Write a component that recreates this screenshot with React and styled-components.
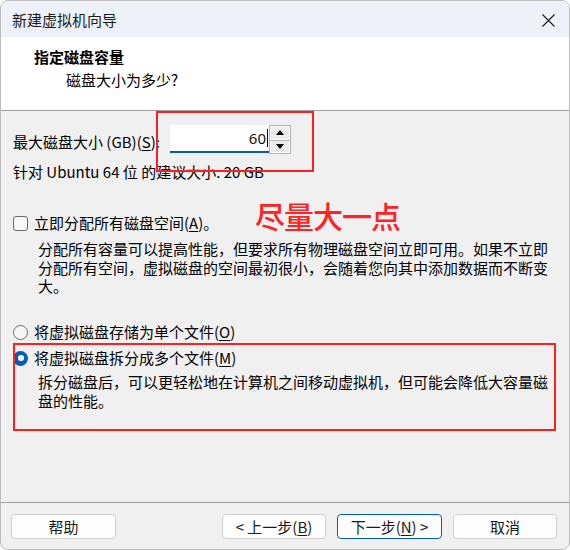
import React from 'react';
import styled, { createGlobalStyle } from 'styled-components';

const GlobalStyle = createGlobalStyle`
  html, body {
    margin: 0;
    padding: 0;
    background: #ffffff;
  }
  body {
    font-family: "Noto Sans CJK SC", "Noto Sans", sans-serif;
    color: #000;
  }
`;

const Window = styled.div`
  width: 570px;
  height: 550px;
  box-sizing: border-box;
  border: 1px solid #bdbdbd;
  border-radius: 8px;
  overflow: hidden;
  display: flex;
  flex-direction: column;
  background: #f0f0f0;
`;

const TitleBar = styled.div`
  height: 36px;
  flex: none;
  display: flex;
  align-items: center;
  justify-content: space-between;
  padding: 0 14px 0 11px;
  background: #eef2f8;
  font-size: 15px;
  color: #1b1b1b;
`;

const CloseIcon = styled.svg`
  width: 13px;
  height: 13px;
  margin-top: 2px;
`;

const Header = styled.div`
  flex: none;
  background: #ffffff;
  border-bottom: 1px solid #a0a0a0;
  padding: 10px 0 0 33px;
  height: 63px;
`;

const HeaderTitle = styled.div`
  font-size: 15px;
  font-weight: 700;
  line-height: 20px;
`;

const HeaderSub = styled.div`
  font-size: 15px;
  line-height: 20px;
  margin-top: 3px;
  padding-left: 32px;
`;

const Body = styled.div`
  position: relative;
  height: 391px;
  flex: none;
  padding-left: 12px;
  box-sizing: border-box;
  font-size: 15px;
`;

const FieldRow = styled.div`
  display: flex;
  align-items: center;
  height: 28px;
  padding-top: 14px;
`;

const FieldLabel = styled.label`
  width: 157px;
  line-height: 20px;
  margin-top: 5px;
`;

const NumberBox = styled.div`
  width: 99px;
  height: 28px;
  box-sizing: border-box;
  background: #ffffff;
  border-bottom: 2px solid #005fb8;
  display: flex;
  align-items: center;
  justify-content: flex-end;
  padding-right: 1px;
  font-family: "Noto Sans", sans-serif;
  font-size: 15px;
  color: #111;
`;

const Caret = styled.span`
  display: inline-block;
  width: 1px;
  height: 18px;
  background: #000;
  margin-left: 1px;
`;

const Spinner = styled.div`
  width: 22px;
  height: 29px;
  display: flex;
  flex-direction: column;
  margin-top: 1px;
  border: 1px solid #b3b3b3;
  box-sizing: border-box;
`;

const SpinButton = styled.div`
  flex: 1;
  display: flex;
  align-items: center;
  justify-content: center;
  background: #ececec;
  border: 1px solid #fafafa;
  & + & {
    border-top: 1px solid #b3b3b3;
  }
`;

const Hint = styled.div`
  line-height: 20px;
  margin-top: 9px;
`;

const OptionRow = styled.div`
  display: flex;
  align-items: center;
  gap: 6px;
  line-height: 20px;
  margin-top: ${p => p.$top}px;
`;

const CheckBox = styled.span`
  width: 15px;
  height: 15px;
  box-sizing: border-box;
  border: 1px solid #6a6a6a;
  border-radius: 3px;
  background: #f8f8f8;
`;

const Radio = styled.span`
  width: 15px;
  height: 15px;
  box-sizing: border-box;
  border-radius: 50%;
  ${p => p.$checked ? `
    background: #005fb8;
    display: flex;
    align-items: center;
    justify-content: center;
    &::after {
      content: "";
      width: 6px;
      height: 6px;
      border-radius: 50%;
      background: #fff;
    }
  ` : `
    border: 1px solid #6a6a6a;
    background: #f6f6f6;
  `}
`;

const Note = styled.div`
  margin-top: ${p => p.$top}px;
  padding-left: 25px;
  white-space: nowrap;
`;

const NoteLine = styled.div`
  height: 18.5px;
  line-height: 18.5px;
`;

const Key = styled.span`
  text-decoration: underline;
  text-underline-offset: 2px;
`;

const RedFrame = styled.div`
  position: absolute;
  border: 2px solid #ff1f1f;
  box-sizing: border-box;
  pointer-events: none;
`;

const RedNote = styled.div`
  position: absolute;
  left: 254px;
  top: 88px;
  font-size: 30px;
  line-height: 32px;
  font-weight: 500;
  color: #ff2424;
  letter-spacing: -1px;
`;

const Footer = styled.div`
  flex: none;
  border-top: 1px solid #a0a0a0;
  display: flex;
  align-items: flex-start;
  padding: 11px 12px 0 10px;
  height: 35px;
`;

const Spacer = styled.div`
  flex: 1;
`;

const ButtonGroup = styled.div`
  display: flex;
  gap: 11px;
`;

const Button = styled.button`
  width: ${p => p.$w || 104}px;
  height: 25px;
  box-sizing: border-box;
  background: #fdfdfd;
  border: 1px solid ${p => p.$primary ? '#005fb8' : '#d0d0d0'};
  border-radius: 4px;
  font-family: "Noto Sans CJK SC", "Noto Sans", sans-serif;
  font-size: 15px;
  line-height: 20px;
  color: #1a1a1a;
  padding: 0;
`;

function Arrow({ up }) {
  return (
    <svg width="8" height="5" viewBox="0 0 8 5">
      <path d={up ? 'M0 5 L4 0 L8 5 Z' : 'M0 0 L8 0 L4 5 Z'} fill="#000" />
    </svg>
  );
}

export default function App() {
  return (
    <>
      <GlobalStyle />
      <Window>
        <TitleBar>
          <span>新建虚拟机向导</span>
          <CloseIcon viewBox="0 0 13 13">
            <path d="M0.5 0.5 L12.5 12.5 M12.5 0.5 L0.5 12.5" stroke="#1a1a1a" strokeWidth="1.1" />
          </CloseIcon>
        </TitleBar>

        <Header>
          <HeaderTitle>指定磁盘容量</HeaderTitle>
          <HeaderSub>磁盘大小为多少?</HeaderSub>
        </Header>

        <Body>
          <FieldRow>
            <FieldLabel>最大磁盘大小 (GB)(<Key>S</Key>):</FieldLabel>
            <NumberBox>
              60<Caret />
            </NumberBox>
            <Spinner>
              <SpinButton><Arrow up /></SpinButton>
              <SpinButton><Arrow /></SpinButton>
            </Spinner>
          </FieldRow>
          <Hint>针对 Ubuntu 64 位 的建议大小: 20 GB</Hint>

          <OptionRow $top={31}>
            <CheckBox />
            <span>立即分配所有磁盘空间(<Key>A</Key>)。</span>
          </OptionRow>
          <Note $top={7}>
            <NoteLine>分配所有容量可以提高性能，但要求所有物理磁盘空间立即可用。如果不立即</NoteLine>
            <NoteLine>分配所有空间，虚拟磁盘的空间最初很小，会随着您向其中添加数据而不断变</NoteLine>
            <NoteLine>大。</NoteLine>
          </Note>

          <OptionRow $top={26.5}>
            <Radio />
            <span>将虚拟磁盘存储为单个文件(<Key>O</Key>)</span>
          </OptionRow>
          <OptionRow $top={6}>
            <Radio $checked />
            <span>将虚拟磁盘拆分成多个文件(<Key>M</Key>)</span>
          </OptionRow>
          <Note $top={5}>
            <NoteLine>拆分磁盘后，可以更轻松地在计算机之间移动虚拟机，但可能会降低大容量磁</NoteLine>
            <NoteLine>盘的性能。</NoteLine>
          </Note>

          <RedFrame style={{ left: 155, top: 0, width: 158, height: 61 }} />
          <RedNote>尽量大一点</RedNote>
          <RedFrame style={{ left: 12, top: 232, width: 543, height: 88 }} />
        </Body>

        <Footer>
          <Button $w={105}>帮助</Button>
          <Spacer />
          <ButtonGroup>
            <Button>&lt; 上一步(<Key>B</Key>)</Button>
            <Button $primary $w={105}>下一步(<Key>N</Key>) &gt;</Button>
            <Button>取消</Button>
          </ButtonGroup>
        </Footer>
      </Window>
    </>
  );
}
